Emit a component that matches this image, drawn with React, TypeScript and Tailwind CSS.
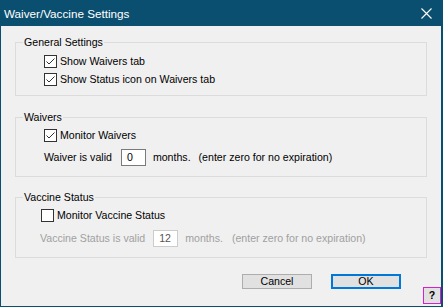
import type { ReactNode } from "react";

const FONT = { fontFamily: '"Liberation Sans", Arial, sans-serif' };

function CheckBox({ checked }: { checked: boolean }) {
  return (
    <span className="flex h-[13px] w-[13px] shrink-0 items-center justify-center border border-[#333333] bg-white">
      {checked && (
        <svg width="11" height="11" viewBox="0 0 11 11">
          <polyline points="1.5,5.5 4,8 9.5,2.5" fill="none" stroke="#333333" strokeWidth="1" />
        </svg>
      )}
    </span>
  );
}

function CheckRow({ checked, label }: { checked: boolean; label: string }) {
  return (
    <div className="flex h-[18px] items-center gap-[3px]">
      <CheckBox checked={checked} />
      <span>{label}</span>
    </div>
  );
}

function Group({ title, children, className }: { title: string; children: ReactNode; className: string }) {
  return (
    <fieldset className={`mx-[14px] border border-[#dcdcdc] ${className}`}>
      <legend className="ml-[7px] px-[1px] leading-[13px]">{title}</legend>
      {children}
    </fieldset>
  );
}

export default function App() {
  return (
    <div
      className="flex h-[307px] w-[443px] flex-col border-r-2 border-l border-b border-[#0b4f70] bg-[#f0f0f0] text-[10.6px] leading-[13px] text-black"
      style={FONT}
    >
      <div className="flex h-[26px] shrink-0 items-center justify-between bg-[#0b4f70] pl-[3px] pr-[9px] text-[11.7px] text-white">
        <span>Waiver/Vaccine Settings</span>
        <svg width="11" height="11" viewBox="0 0 11 11">
          <path d="M0.5 0.5 L10.5 10.5 M10.5 0.5 L0.5 10.5" stroke="white" strokeWidth="1.1" />
        </svg>
      </div>

      <div className="flex flex-1 flex-col">
        <Group title="General Settings" className="mt-[10px]">
          <div className="pb-[7px] pl-[28px] pt-[3px]">
            <CheckRow checked label="Show Waivers tab" />
            <CheckRow checked label="Show Status icon on Waivers tab" />
          </div>
        </Group>

        <Group title="Waivers" className="mt-[15px]">
          <div className="pb-[10px] pl-[28px] pt-[2px]">
            <CheckRow checked label="Monitor Waivers" />
            <div className="mt-[5px] flex h-[17px] items-center">
              <span>Waiver is valid</span>
              <span className="ml-[9px] flex h-[17px] w-[25px] items-center border border-[#7a7a7a] bg-white pl-[5px]">0</span>
              <span className="ml-[7px]">months.</span>
              <span className="ml-[8px]">(enter zero for no expiration)</span>
            </div>
          </div>
        </Group>

        <Group title="Vaccine Status" className="mt-[14px]">
          <div className="pb-[10px] pl-[25px] pt-[2px]">
            <CheckRow checked={false} label="Monitor Vaccine Status" />
            <div className="-ml-[1px] mt-[6px] flex h-[17px] items-center text-[#a0a0a0]">
              <span>Vaccine Status is valid</span>
              <span className="ml-[8px] flex h-[17px] w-[25px] items-center border border-[#cccccc] bg-white pl-[5px] text-[#555555]">12</span>
              <span className="ml-[7px]">months.</span>
              <span className="ml-[9px]">(enter zero for no expiration)</span>
            </div>
          </div>
        </Group>

        <div className="mb-[2px] mt-auto flex items-start justify-end">
          <button className="mb-[13px] flex h-[15px] w-[70px] items-center justify-center border border-[#adadad] bg-[#e1e1e1]">
            Cancel
          </button>
          <button className="ml-[19px] flex h-[15px] w-[70px] items-center justify-center border-2 border-[#0078d7] bg-[#e1e1e1]">
            OK
          </button>
          <button className="ml-[22px] mt-[13px] flex h-[17px] w-[18px] items-center justify-center border border-[#d81fd0] bg-[#e1e1e1] font-bold">
            ?
          </button>
        </div>
      </div>
    </div>
  );
}
